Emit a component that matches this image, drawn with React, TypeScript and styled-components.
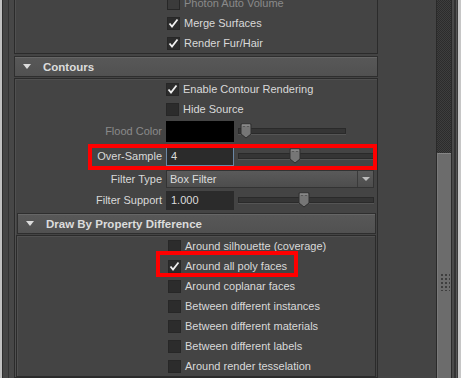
import styled, { createGlobalStyle } from "styled-components";

const GlobalStyle = createGlobalStyle`
  html, body {
    margin: 0;
    padding: 0;
    background: #444444;
    overflow: hidden;
  }
  body {
    font-family: "Liberation Sans", Arial, sans-serif;
    font-size: 11px;
    color: #d9d9d9;
  }
`;

const Screen = styled.div`
  position: relative;
  display: flex;
  width: 461px;
  height: 378px;
  overflow: hidden;
  background: #444444;
`;

const LeftEdge = styled.div`
  flex: 0 0 14px;
  background: linear-gradient(
    to right,
    #c2c2c2 0 2px,
    #2e2e2e 2px 3px,
    #454545 3px 8px,
    #333333 8px 9px,
    #474747 9px 14px
  );
`;

const RightGutter = styled.div`
  flex: 0 0 58px;
  background: #444444;
`;

const RightEdge = styled.div`
  flex: 0 0 10px;
  background: linear-gradient(
    to right,
    #2a2a2a 0 1px,
    #4a4a4a 1px 3px,
    #333333 3px 5px,
    #565656 5px 6px,
    #3a3a3a 6px 7px,
    #c6c6c6 7px 10px
  );
`;

const ScrollBar = styled.div`
  flex: 0 0 15px;
  display: flex;
  flex-direction: column;
  border-left: 1px solid #2a2a2a;
  box-sizing: border-box;
`;

const Track = styled.div`
  flex: 0 0 153px;
  background: repeating-conic-gradient(#2c2c2c 0 25%, #3e3e3e 0 50%) 0 0 / 2px 2px;
`;

const Thumb = styled.div`
  flex: 1;
  background: #6c6c6c;
  border-top: 1px solid #858585;
  border-left: 1px solid #7a7a7a;
  display: flex;
  justify-content: center;
  padding-top: 119px;
`;

const Grip = styled.div`
  width: 10px;
  height: 18px;
  background-image: radial-gradient(#3e3e3e 0.9px, transparent 1.2px);
  background-size: 4px 4px;
  background-position: 0 0;
`;

const Main = styled.div`
  flex: 0 0 364px;
  display: flex;
  flex-direction: column;
  margin-top: -8px;
`;

const Body = styled.div<{ $inset?: boolean }>`
  border: 1px solid #2b2b2b;
  box-shadow: inset 1px 1px 0 #505050;
  background: #444444;
  padding-bottom: ${(p) => (p.$inset ? "0" : "0")};
  margin: ${(p) => (p.$inset ? "0 1px" : "0")};
`;

const Header = styled.div<{ $nested?: boolean }>`
  display: flex;
  align-items: center;
  gap: ${(p) => (p.$nested ? "12px" : "12px")};
  height: 19px;
  margin: ${(p) => (p.$nested ? "2px 1px 1px 2px" : "2px 0 1px")};
  padding-left: ${(p) => (p.$nested ? "8px" : "8px")};
  background: linear-gradient(#585858, #515151);
  border: 1px solid #2e2e2e;
  box-shadow: inset 0 1px 0 #666666;
  font-weight: bold;
  font-size: 11.5px;
  color: #dcdcdc;
`;

const Triangle = styled.span`
  width: 0;
  height: 0;
  border-left: 4.5px solid transparent;
  border-right: 4.5px solid transparent;
  border-top: 5px solid #dcdcdc;
`;

const CheckRow = styled.div<{ $indent: number }>`
  display: flex;
  align-items: center;
  gap: 4px;
  height: 20px;
  padding-left: ${(p) => p.$indent}px;
`;

const Box = styled.span<{ $dim?: boolean }>`
  width: 13px;
  height: 13px;
  box-sizing: border-box;
  background: ${(p) => (p.$dim ? "#3b3b3b" : "#2c2c2c")};
  border: 1px solid #272727;
  display: flex;
  align-items: center;
  justify-content: center;
`;

const Label = styled.span<{ $dim?: boolean }>`
  color: ${(p) => (p.$dim ? "#8a8a8a" : "#d9d9d9")};
  white-space: nowrap;
`;

const FieldRow = styled.div<{ $h: number }>`
  display: grid;
  grid-template-columns: 147px auto 1fr;
  align-items: center;
  column-gap: 4px;
  height: ${(p) => p.$h}px;
`;

const FieldLabel = styled.span<{ $dim?: boolean }>`
  text-align: right;
  color: ${(p) => (p.$dim ? "#8a8a8a" : "#d9d9d9")};
  white-space: nowrap;
`;

const Swatch = styled.div`
  width: 68px;
  height: 21px;
  background: #000000;
`;

const Input = styled.div<{ $focus?: boolean }>`
  width: 68px;
  height: 19px;
  box-sizing: border-box;
  padding-left: 4px;
  display: flex;
  align-items: center;
  background: #2b2b2b;
  border: 1px solid ${(p) => (p.$focus ? "#6a87a6" : "#2b2b2b")};
  color: #dcdcdc;
`;

const Slider = styled.div<{ $w: number }>`
  position: relative;
  width: ${(p) => p.$w}px;
  height: 16px;
  display: flex;
  align-items: center;
`;

const SliderTrack = styled.div`
  flex: 1;
  height: 4px;
  background: #353535;
  border: 1px solid #2a2a2a;
  box-shadow: 0 1px 0 #555555;
`;

const Handle = styled.svg`
  position: absolute;
  top: 0;
`;

const Dropdown = styled.div`
  grid-column: 2 / 4;
  width: 208px;
  height: 18px;
  box-sizing: border-box;
  display: flex;
  align-items: center;
  background: linear-gradient(#5a5a5a, #4d4d4d);
  border: 1px solid #333333;
  color: #dcdcdc;
`;

const DropText = styled.span`
  flex: 1;
  padding-left: 3px;
`;

const DropButton = styled.span`
  width: 15px;
  height: 100%;
  border-left: 1px solid #3a3a3a;
  display: flex;
  align-items: center;
  justify-content: center;
`;

const SmallArrow = styled.span`
  width: 0;
  height: 0;
  border-left: 4px solid transparent;
  border-right: 4px solid transparent;
  border-top: 4px solid #bdbdbd;
`;

const Callout = styled.div`
  position: absolute;
  border: 4px solid #ff0000;
  pointer-events: none;
`;

function Check({ on, dim }: { on?: boolean; dim?: boolean }) {
  return (
    <Box $dim={dim}>
      {on && (
        <svg width="11" height="11" viewBox="0 0 11 11">
          <polyline
            points="1.5,5.5 4,8.5 9.5,1.5"
            fill="none"
            stroke="#f0f0f0"
            strokeWidth="1.8"
          />
        </svg>
      )}
    </Box>
  );
}

function CheckItem({
  label,
  on,
  dim,
  indent,
}: {
  label: string;
  on?: boolean;
  dim?: boolean;
  indent: number;
}) {
  return (
    <CheckRow $indent={indent}>
      <Check on={on} dim={dim} />
      <Label $dim={dim}>{label}</Label>
    </CheckRow>
  );
}

function SliderBar({ width, pos }: { width: number; pos: number }) {
  return (
    <Slider $w={width}>
      <SliderTrack />
      <Handle width="12" height="16" viewBox="0 0 12 16" style={{ left: pos }}>
        <path d="M1 1 H11 V11 L6 15 L1 11 Z" fill="#767676" stroke="#2e2e2e" />
        <path d="M2 2 H10" stroke="#9a9a9a" />
        <path d="M4 3 V4 M8 3 V4" stroke="#3a3a3a" />
      </Handle>
    </Slider>
  );
}

const drawItems: { label: string; on?: boolean }[] = [
  { label: "Around silhouette (coverage)" },
  { label: "Around all poly faces", on: true },
  { label: "Around coplanar faces" },
  { label: "Between different instances" },
  { label: "Between different materials" },
  { label: "Between different labels" },
  { label: "Around render tesselation" },
];

export default function App() {
  return (
    <>
      <GlobalStyle />
      <Screen>
        <LeftEdge />
        <Main>
          <Body>
            <CheckItem indent={152} label="Photon Auto Volume" dim />
            <CheckItem indent={152} label="Merge Surfaces" on />
            <CheckItem indent={152} label="Render Fur/Hair" on />
          </Body>
          <Header>
            <Triangle />
            Contours
          </Header>
          <Body>
            <CheckItem indent={151} label="Enable Contour Rendering" on />
            <CheckItem indent={151} label="Hide Source" />
            <FieldRow $h={24}>
              <FieldLabel $dim>Flood Color</FieldLabel>
              <Swatch />
              <SliderBar width={108} pos={2} />
            </FieldRow>
            <FieldRow $h={26}>
              <FieldLabel>Over-Sample</FieldLabel>
              <Input $focus>4</Input>
              <SliderBar width={136} pos={51} />
            </FieldRow>
            <FieldRow $h={20}>
              <FieldLabel>Filter Type</FieldLabel>
              <Dropdown>
                <DropText>Box Filter</DropText>
                <DropButton>
                  <SmallArrow />
                </DropButton>
              </Dropdown>
            </FieldRow>
            <FieldRow $h={22}>
              <FieldLabel>Filter Support</FieldLabel>
              <Input>1.000</Input>
              <SliderBar width={136} pos={60} />
            </FieldRow>
            <Header $nested>
              <Triangle />
              Draw By Property Difference
            </Header>
            <Body $inset>
              {drawItems.map((it) => (
                <CheckItem key={it.label} indent={151} label={it.label} on={it.on} />
              ))}
            </Body>
          </Body>
        </Main>
        <RightGutter />
        <ScrollBar>
          <Track />
          <Thumb>
            <Grip />
          </Thumb>
        </ScrollBar>
        <RightEdge />
        <Callout style={{ left: 88, top: 144, width: 281, height: 18 }} />
        <Callout style={{ left: 156, top: 251, width: 134, height: 18 }} />
      </Screen>
    </>
  );
}
